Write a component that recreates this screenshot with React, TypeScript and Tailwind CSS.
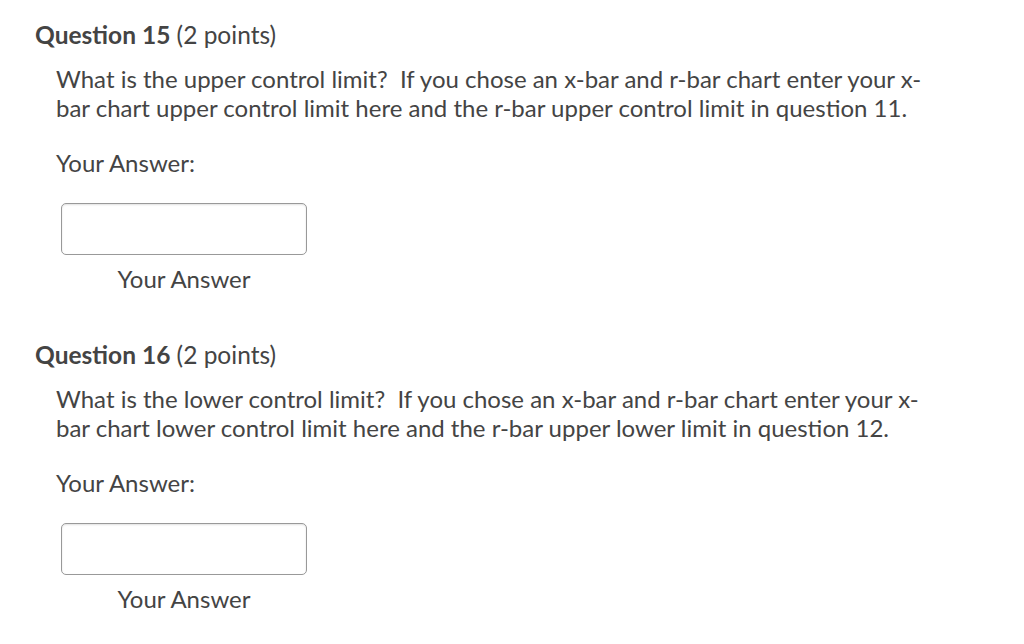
import React from 'react';

const questions = [
  {
    num: 15,
    text: 'What is the upper control limit?\u00a0 If you chose an x-bar and r-bar chart enter your x-bar chart upper control limit here and the r-bar upper control limit in question 11.',
  },
  {
    num: 16,
    text: 'What is the lower control limit?\u00a0 If you chose an x-bar and r-bar chart enter your x-bar chart lower control limit here and the r-bar upper lower limit in question 12.',
  },
];

function Question({ num, text }: { num: number; text: string }) {
  return (
    <section className="mb-[48px]">
      <h2 className="text-[24.5px] leading-[28px] text-[#444]">
        <span className="font-bold">Question {num}</span> (2 points)
      </h2>
      <div className="pl-[21px] mt-[15px]">
        <p className="text-[24px] leading-[29px] text-[#444] w-[880px]">{text}</p>
        <p className="text-[24px] leading-[29px] text-[#444] mt-[26px]">Your Answer:</p>
        <div className="mt-[26px] pl-[5px] w-[251px] flex flex-col items-center">
          <input
            type="text"
            className="w-[246px] h-[52px] border border-[#999] rounded-[5px] bg-white shadow-[inset_0_1px_2px_rgba(0,0,0,0.12)]"
          />
          <span className="text-[24px] leading-[29px] text-[#444] mt-[9px]">Your Answer</span>
        </div>
      </div>
    </section>
  );
}

export default function App() {
  return (
    <div className="min-h-screen bg-white pt-[21px] pl-[35px] font-['Lato',sans-serif]">
      {questions.map((q) => (
        <Question key={q.num} num={q.num} text={q.text} />
      ))}
    </div>
  );
}
